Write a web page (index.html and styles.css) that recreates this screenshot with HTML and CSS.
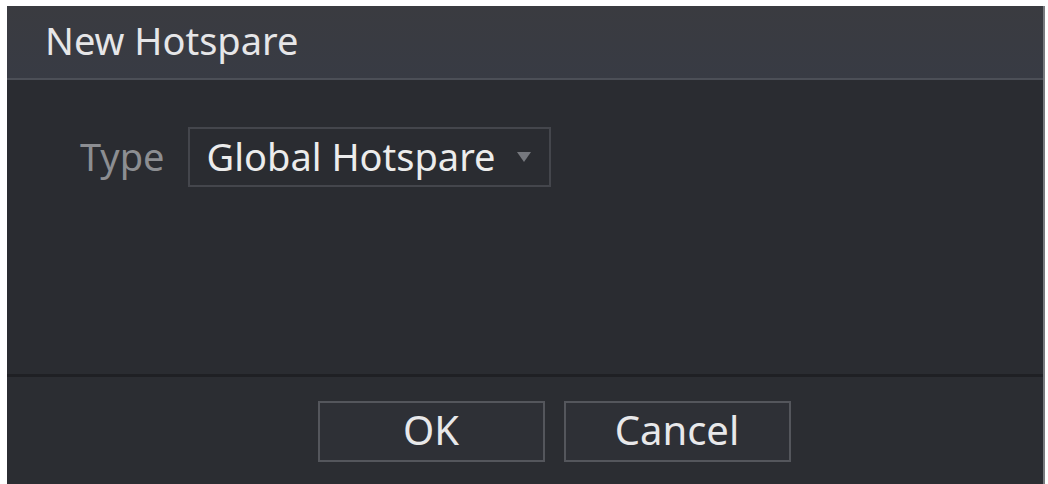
FILE: index.html
```html
<!DOCTYPE html>
<html>
<head>
<meta charset="utf-8">
<link rel="stylesheet" href="styles.css">
</head>
<body>
<div class="dialog">
  <div class="header"><span class="title">New Hotspare</span></div>
  <div class="content">
    <div class="row">
      <span class="label">Type</span>
      <div class="select">
        <span class="value">Global Hotspare</span>
        <span class="arrow"></span>
      </div>
    </div>
  </div>
  <div class="footer">
    <button class="btn">OK</button>
    <button class="btn">Cancel</button>
  </div>
</div>
</body>
</html>
```
FILE: styles.css
```css
html, body {
  margin: 0;
  padding: 0;
  background: #ffffff;
  width: 1048px;
  height: 484px;
  overflow: hidden;
}
body {
  font-family: "Noto Sans", "Open Sans", sans-serif;
}
.dialog {
  margin: 6px 0 0 7px;
  width: 1038px;
  height: 478px;
  display: flex;
  flex-direction: column;
  background: #2a2c31;
  border-right: 2px solid #7a7c80;
  box-sizing: border-box;
}
.header {
  height: 74px;
  box-sizing: border-box;
  background: linear-gradient(180deg, #3a3b40 0%, #383b44 100%);
  border-bottom: 2px solid #4c4f57;
  display: flex;
  align-items: center;
  padding-left: 38px;
}
.title {
  color: #e6e6e8;
  font-size: 38px;
  line-height: 1;
  margin-top: -4px;
}
.content {
  flex: 1;
  padding: 47px 0 0 73px;
}
.row {
  display: flex;
  align-items: center;
  gap: 23px;
}
.label {
  color: #8c8e92;
  font-size: 38px;
  margin-top: -3px;
}
.select {
  width: 363px;
  height: 60px;
  box-sizing: border-box;
  border: 2px solid #44464c;
  display: flex;
  align-items: center;
  padding-left: 17px;
}
.value {
  color: #ececec;
  font-size: 38px;
  margin-top: -3px;
}
.arrow {
  width: 0;
  height: 0;
  margin-left: 21px;
  border-left: 7px solid transparent;
  border-right: 7px solid transparent;
  border-top: 10px solid #76787e;
}
.footer {
  height: 110px;
  box-sizing: border-box;
  border-top: 3px solid #1f2024;
  background: #2b2d32;
  display: flex;
  justify-content: center;
  align-items: flex-start;
  gap: 19px;
  padding: 24px 0 0 58px;
}
.btn {
  width: 227px;
  height: 61px;
  box-sizing: border-box;
  border: 2px solid #54565c;
  background: #2e3036;
  color: #e8e8ea;
  font-family: "Noto Sans", "Open Sans", sans-serif;
  font-size: 40px;
  padding: 0 0 4px 0;
  line-height: 1;
}
```
